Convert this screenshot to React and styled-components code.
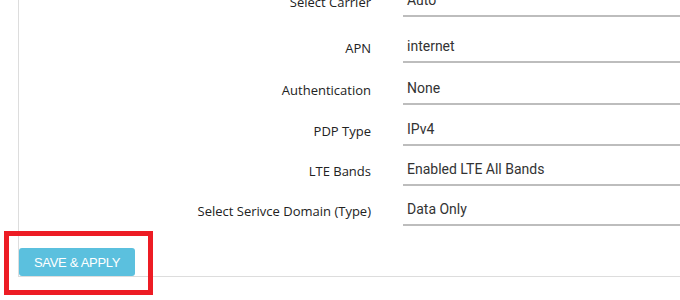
import React from 'react';
import styled, { createGlobalStyle } from 'styled-components';

const GlobalStyle = createGlobalStyle`
  html, body {
    margin: 0;
    padding: 0;
    background: #fff;
    overflow: hidden;
  }
  body {
    width: 680px;
    height: 300px;
    position: relative;
  }
`;

const Panel = styled.div`
  margin-left: 18px;
  margin-top: -11px;
  border-left: 1px solid #dddddd;
  border-bottom: 1px solid #dddddd;
  height: 288px;
  display: flex;
  flex-direction: column;
  box-sizing: border-box;
`;

const Row = styled.div`
  display: grid;
  grid-template-columns: 352px 1fr;
  column-gap: 32px;
  align-items: end;
  margin-top: ${p => p.$top}px;
`;

const Label = styled.label`
  text-align: right;
  font-family: 'Open Sans', 'Noto Sans', sans-serif;
  font-size: 13px;
  line-height: 20px;
  color: #222;
  padding-bottom: 5px;
`;

const Field = styled.div`
  font-family: Roboto, 'Liberation Sans', sans-serif;
  font-size: 14px;
  line-height: 20px;
  color: #333;
  padding: 1px 0 5px 4px;
  border-bottom: 2px solid #bdbdbd;
`;

const Footer = styled.div`
  margin-top: auto;
  display: flex;
`;

const SaveButton = styled.button`
  width: 116px;
  height: 28px;
  border: none;
  border-radius: 3px;
  background: #5bc0de;
  color: #fff;
  font-family: 'Liberation Sans', Arial, sans-serif;
  font-size: 13px;
  letter-spacing: -0.3px;
  padding: 0;
  cursor: pointer;
`;

const Highlight = styled.div`
  position: absolute;
  left: 4px;
  top: 231px;
  width: 149px;
  height: 64px;
  box-sizing: border-box;
  border: 5px solid #ed1c24;
  pointer-events: none;
`;

const rows = [
  { label: 'Select Carrier', value: 'Auto', top: 0 },
  { label: 'APN', value: 'internet', top: 18 },
  { label: 'Authentication', value: 'None', top: 14 },
  { label: 'PDP Type', value: 'IPv4', top: 13 },
  { label: 'LTE Bands', value: 'Enabled LTE All Bands', top: 12 },
  { label: 'Select Serivce Domain (Type)', value: 'Data Only', top: 12 },
];

const App = () => (
  <>
    <GlobalStyle />
    <Panel>
      {rows.map(r => (
        <Row key={r.label} $top={r.top}>
          <Label>{r.label}</Label>
          <Field>{r.value}</Field>
        </Row>
      ))}
      <Footer>
        <SaveButton>SAVE &amp; APPLY</SaveButton>
      </Footer>
    </Panel>
    <Highlight />
  </>
);

export default App;
